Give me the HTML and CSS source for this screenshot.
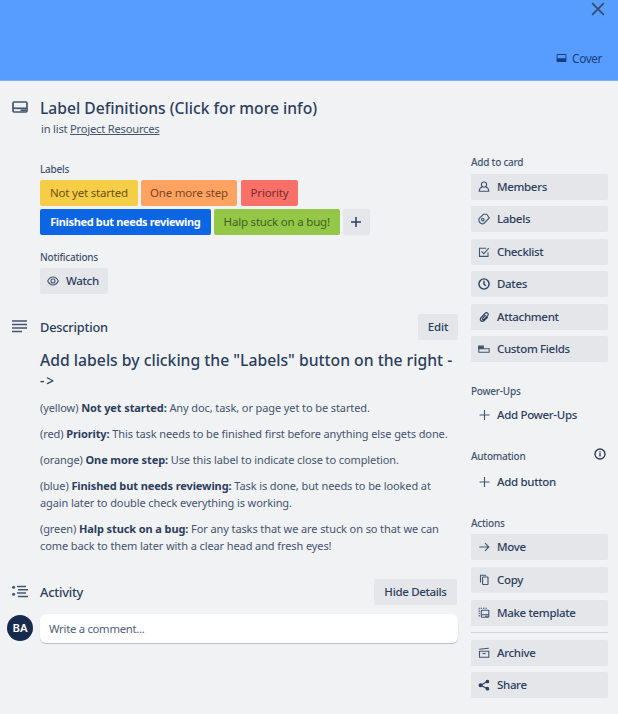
FILE: index.html
```html
<!DOCTYPE html>
<html lang="en">
<head>
<meta charset="utf-8">
<title>Label Definitions</title>
<link rel="stylesheet" href="styles.css">
</head>
<body>
<header class="cover">
  <svg class="close" viewBox="0 0 12 12"><path d="M1 1l10 10M11 1L1 11"/></svg>
  <div class="cover-btn"><svg class="cover-icon" viewBox="0 0 11 9"><path fill-rule="evenodd" d="M1 0h9a1 1 0 0 1 1 1v7a1 1 0 0 1-1 1H1a1 1 0 0 1-1-1V1a1 1 0 0 1 1-1zm0 1.2v3.6h9V1.2z"/></svg><span>Cover</span></div>
</header>
<div class="columns">
  <main class="main">
    <section class="title-row">
      <svg class="gutter-icon card-icon" viewBox="0 0 16 12"><rect x="1" y="1" width="14" height="10" rx="1.2"/><path d="M1 7.3h14"/><path d="M8.500 9.300h5.500"/></svg>
      <h1>Label Definitions (Click for more info)</h1>
      <p class="in-list">in list <u>Project Resources</u></p>
    </section>
    <section class="labels">
      <h3>Labels</h3>
      <div class="chips">
        <span class="chip yellow">Not yet started</span><span class="chip orange">One more step</span><span class="chip red">Priority</span>
      </div>
      <div class="chips">
        <span class="chip blue">Finished but needs reviewing</span><span class="chip green">Halp stuck on a bug!</span><span class="chip plus"><svg viewBox="0 0 10 10"><path d="M5 0v10M0 5h10"/></svg></span>
      </div>
    </section>
    <section class="notifications">
      <h3>Notifications</h3>
      <div class="btn watch"><svg class="icon" viewBox="0 0 12 12"><path d="M.7 6C2 3.300 3.800 2 6 2s4 1.300 5.300 4C10 8.700 8.200 10 6 10S2 8.700.7 6z"/><circle cx="6" cy="6" r="2"/></svg><span>Watch</span></div>
    </section>
    <section class="description">
      <div class="section-head">
        <svg class="gutter-icon lines" viewBox="0 0 16 13"><path d="M0 1h15M0 4.500h15M0 8h15M0 11.500h10"/></svg>
        <h2>Description</h2>
        <div class="btn edit"><span>Edit</span></div>
      </div>
      <div class="prose">
        <h4>Add labels by clicking the "Labels" button on the right -<br><span class="arrow">-&gt;</span></h4>
        <p>(yellow) <b>Not yet started:</b> Any doc, task, or page yet to be started.</p>
        <p>(red) <b>Priority:</b> This task needs to be finished first before anything else gets done.</p>
        <p>(orange) <b>One more step:</b> Use this label to indicate close to completion.</p>
        <p>(blue) <b>Finished but needs reviewing:</b> Task is done, but needs to be looked at<br>again later to double check everything is working.</p>
        <p>(green) <b>Halp stuck on a bug:</b> For any tasks that we are stuck on so that we can<br>come back to them later with a clear head and fresh eyes!</p>
      </div>
    </section>
    <section class="activity">
      <div class="section-head">
        <svg class="gutter-icon lines" viewBox="0 0 16 13"><path d="M5 1.500h9M6 4.800h10M5 8.100h9M6 11.400h10"/><circle cx="1.600" cy="2.200" r="1.500"/><circle cx="1.600" cy="9.300" r="1.500"/></svg>
        <h2>Activity</h2>
        <div class="btn hide"><span>Hide Details</span></div>
      </div>
      <div class="comment-row">
        <div class="avatar">BA</div>
        <div class="comment">Write a comment...</div>
      </div>
    </section>
  </main>
  <aside class="side">
    <h3>Add to card</h3>
    <div class="stack">
      <div class="btn"><svg class="icon" viewBox="0 0 12 12"><circle cx="6" cy="3.600" r="2.600"/><path d="M4.200 5.700C2.300 6.500 1.200 8 1.200 10.300h9.600C10.800 8 9.700 6.500 7.800 5.700"/></svg><span>Members</span></div>
      <div class="btn"><svg class="icon" viewBox="0 0 12 12"><path d="M1 5.700L5.500 1.300h3.200L11.300 5 5.800 10.500c-1.300 1-4.100-.4-4.800-2.200z"/><circle cx="4.800" cy="6.600" r="1.300"/></svg><span>Labels</span></div>
      <div class="btn"><svg class="icon" viewBox="0 0 12 12"><path d="M10 6.500v3.900H1.500V2.200h6.600M3.500 5.400l2.300 2.300 5-5.500"/></svg><span>Checklist</span></div>
      <div class="btn"><svg class="icon bold" viewBox="0 0 12 12"><circle cx="6" cy="6" r="5.100"/><path d="M6 2.800v3.400l1.900 1.600"/></svg><span>Dates</span></div>
      <div class="btn"><svg class="icon clip" viewBox="0 0 12 12"><path d="M9.900 5.800L6.200 9.500C3.900 11.700.9 9.100 3 6.700l4-4.300c1.900-1.800 4.300.4 2.700 2.200L6.100 8.300c-1.100 1-2.300-.2-1.400-1.200L7.600 4"/></svg><span>Attachment</span></div>
      <div class="btn"><svg class="icon" viewBox="0 0 12 12"><path class="solid" d="M.8 3h4.500v2.500H.8z"/><path d="M.8 3.300v6h10.400V5.700H.8"/></svg><span>Custom Fields</span></div>
    </div>
    <h3 class="spaced">Power-Ups</h3>
    <div class="btn ghost"><svg class="icon" viewBox="0 0 12 12"><path d="M6.500 1v10M1.500 6h10"/></svg><span>Add Power-Ups</span></div>
    <div class="auto-row"><h3>Automation</h3><svg class="info" viewBox="0 0 12 12"><circle cx="6" cy="6" r="5"/><path d="M6 5.300v3.300M6 3.200v1.300"/></svg></div>
    <div class="btn ghost"><svg class="icon" viewBox="0 0 12 12"><path d="M6.500 1v10M1.500 6h10"/></svg><span>Add button</span></div>
    <h3 class="spaced">Actions</h3>
    <div class="stack">
      <div class="btn"><svg class="icon" viewBox="0 0 12 12"><path d="M1.300 6h9.500M7 2.200L10.800 6 7 9.800"/></svg><span>Move</span></div>
      <div class="btn"><svg class="icon" viewBox="0 0 12 12"><rect x="4.600" y="3" width="5.400" height="7.500" rx=".6"/><path d="M2.500 8.500V1.200h5.600"/></svg><span>Copy</span></div>
      <div class="btn"><svg class="icon" viewBox="0 0 12 12"><rect x="3.300" y="3.200" width="7.500" height="7" rx=".8"/><path d="M3.300 7.800h7.500M7 9.200h3"/><path stroke-dasharray="1.400 1" d="M1.200 9.500V1.300h8.500"/></svg><span>Make template</span></div>
    </div>
    <hr>
    <div class="stack">
      <div class="btn"><svg class="icon" viewBox="0 0 12 12"><path d="M1.200 2.300l9.600-1M1.500 4.200h9.300v6.100H1.500zM4.500 6.500h3.200"/></svg><span>Archive</span></div>
      <div class="btn"><svg class="icon share" viewBox="0 0 12 12"><path d="M9.200 2.500L2.800 6.200l6.400 3.500"/><circle cx="9.400" cy="2.500" r="1.300"/><circle cx="2.600" cy="6.200" r="1.500"/><circle cx="9.400" cy="9.700" r="1.300"/></svg><span>Share</span></div>
    </div>
  </aside>
</div>
</body>
</html>
```
FILE: styles.css
```css
* { box-sizing: border-box; margin: 0; padding: 0; }
body { width: 618px; height: 714px; overflow: hidden; background: #f1f2f4; color: #2c3e5d; font: 11.5px/16px "Noto Sans", "Open Sans", sans-serif; white-space: nowrap; }
svg { display: block; fill: none; stroke: #44546f; }
h1, h2, h3, h4 { font-weight: 500; }
.cover { height: 81px; background: #579dff; display: flex; flex-direction: column; align-items: flex-end; border-bottom: 1px solid #85aeee; }
.close { width: 14px; height: 14px; margin: 2px 13px 0 0; stroke: #34496d; stroke-width: 1.4; }
.cover-btn { display: flex; align-items: center; gap: 5px; margin: 34px 16px 0 0; color: #173d7a; font-size: 11.8px; letter-spacing: -.4px; }
.cover-icon { width: 11px; height: 8px; fill: #123e82; stroke: none; }
.columns { display: flex; }
.main { width: 471px; padding-left: 40px; }
.side { width: 137px; padding-top: 72.500px; }
.title-row { position: relative; height: 80px; padding-top: 16px; }
.gutter-icon { position: absolute; left: -28px; width: 16px; }
.card-icon { top: 20px; height: 12px; stroke-width: 1.7; }
h1 { font-size: 15.650px; line-height: 22px; }
.in-list { margin-left: 1px; font-size: 11.2px; letter-spacing: -.22px; line-height: 16px; margin-top: 2px; color: #44546f; }
h3 { font-size: 10px; letter-spacing: -.24px; line-height: 16px; color: #44546f; }
.labels { height: 88px; }
.chips { display: flex; gap: 3px; margin-bottom: 3px; }
.labels h3 { margin-bottom: 3px; }
.chip { height: 26px; border-radius: 2px; display: flex; align-items: center; justify-content: center; font-size: 11.5px; letter-spacing: -.2px; }
.yellow { width: 98px; background: #f5cd47; color: #6b5212; }
.orange { width: 96px; background: #fea362; color: #80451b; }
.red { width: 57px; margin-left: 1px; background: #f87168; color: #7b2a2a; }
.blue { width: 170.500px; background: #0c66e4; color: #fff; font-weight: 700; font-size: 11px; letter-spacing: -.35px; }
.green { width: 126.500px; background: #94c748; color: #41601e; }
.plus { width: 26.500px; background: #e4e6ea; }
.plus svg { width: 10px; height: 10px; stroke-width: 1.5; stroke: #2c3e5d; }
.notifications { height: 64px; }
.notifications h3 { margin-bottom: 3px; }
.btn { height: 26px; display: flex; align-items: center; background: #e4e6ea; border-radius: 2px; font-size: 11.5px; letter-spacing: -.33px; font-weight: 500; padding-left: 7px; }
.icon { width: 12px; height: 12px; margin-right: 7px; stroke-width: 1.1; flex: none; }
.icon .solid { fill: #44546f; }
.bold { stroke-width: 1.4; stroke: #2c3e5d; }
.clip { stroke-width: 1.2; stroke: #2c3e5d; }
.share circle { fill: #2c3e5d; }
.share { stroke: #2c3e5d; }
.watch { width: 68px; }
.section-head { position: relative; display: flex; align-items: center; height: 27px; }
.lines { top: 7px; height: 13px; stroke-width: 1.5; }
.lines circle { fill: #44546f; stroke: none; }
h2 { font-size: 12.8px; letter-spacing: -.22px; line-height: 20px; }
.edit, .hide { padding: 0; justify-content: center; margin-left: auto; }
.edit { width: 40px; margin-right: 13px; letter-spacing: -.1px; }
.hide { width: 83px; margin-right: 14px; }
.description { height: 265px; }
.prose { padding-top: 10px; color: #44546f; font-size: 11px; letter-spacing: -.1px; line-height: 17px; }
.prose h4 { font-size: 15.720px; letter-spacing: 0; line-height: 20px; color: #2c3e5d; margin-bottom: 7.500px; }
.arrow { font-size: 13.500px; letter-spacing: 2px; }
.prose p { margin-bottom: 9px; }
.prose b { color: #2c3e5d; }
.comment-row { display: flex; align-items: center; margin: 9px 0 0 -33px; }
.avatar { width: 26px; height: 26px; border-radius: 50%; background: #172b4d; color: #fff; font-weight: 600; font-size: 11.3px; display: flex; align-items: center; justify-content: center; position: relative; top: -1px; }
.comment { width: 418px; height: 29px; margin-left: 7px; padding-left: 9px; border-radius: 6px; background: #fff; box-shadow: 0 1px 1px #b9bec8; display: flex; align-items: center; color: #505f79; font-size: 11.3px; letter-spacing: -.28px; }
.side h3 { margin-bottom: 4px; }
.stack { display: flex; flex-direction: column; gap: 6.6px; }
.side .spaced { margin: 20.500px 0 3px; }
.side .ghost { background: none; }
.auto-row { display: flex; justify-content: space-between; align-items: flex-start; margin-top: 20px; height: 21px; }
.info { width: 12px; height: 12px; margin-right: 2px; stroke-width: 1.4; stroke: #2c3e5d; }
hr { border: 0; height: 1px; background: #cfd3da; margin: 6.500px 0; }
```
